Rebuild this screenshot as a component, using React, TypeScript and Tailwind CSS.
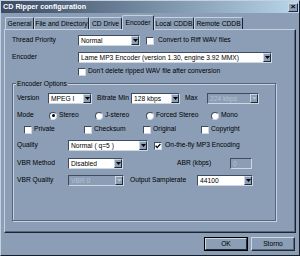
import React from 'react';

const sunken = 'border border-t-[#3f4b5e] border-l-[#3f4b5e] border-r-[#cdd8e5] border-b-[#cdd8e5]';
const raised = 'border border-t-[#cdd8e5] border-l-[#cdd8e5] border-r-[#222b38] border-b-[#222b38]';

function Arrow({ disabled }: { disabled?: boolean }) {
  return (
    <span className={`flex h-full w-[8px] shrink-0 items-center justify-center bg-[#8b9eb6] ${raised}`}>
      <svg width="5" height="3" viewBox="0 0 5 3">
        <polygon points="0,0 5,0 2.5,3" fill={disabled ? '#b4c2d4' : '#000'} />
      </svg>
    </span>
  );
}

function Combo({ width, value, disabled }: { width: string; value: string; disabled?: boolean }) {
  return (
    <div
      className={`flex h-[11px] shrink-0 ${width} ${sunken} ${
        disabled ? 'bg-[#8b9eb6] text-[#b4c2d4]' : 'bg-white text-black'
      }`}
    >
      <span className="flex-1 overflow-hidden whitespace-nowrap pl-[2px] leading-[9px]">{value}</span>
      <Arrow disabled={disabled} />
    </div>
  );
}

function Check({ checked }: { checked?: boolean }) {
  return (
    <span className={`flex h-[8px] w-[8px] shrink-0 items-center justify-center bg-white ${sunken}`}>
      {checked && (
        <svg width="6" height="6" viewBox="0 0 6 6">
          <path d="M0.6 2.8 L2.2 4.6 L5.4 1" stroke="#000" strokeWidth="1.3" fill="none" />
        </svg>
      )}
    </span>
  );
}

function Radio({ checked }: { checked?: boolean }) {
  return (
    <span className="flex h-[8px] w-[8px] shrink-0 items-center justify-center rounded-full border border-t-[#3f4b5e] border-l-[#3f4b5e] border-r-[#cdd8e5] border-b-[#cdd8e5] bg-white">
      {checked && <span className="h-[3px] w-[3px] rounded-full bg-black" />}
    </span>
  );
}

const tabs = [
  { label: 'General', w: 'w-[29px]' },
  { label: 'File and Directory', w: 'w-[55px]' },
  { label: 'CD Drive', w: 'w-[33px]' },
  { label: 'Encoder', w: 'w-[32px]', active: true },
  { label: 'Local CDDB', w: 'w-[40px]' },
  { label: 'Remote CDDB', w: 'w-[49px]' },
];

export default function App() {
  return (
    <div className="h-[256px] w-[300px] overflow-hidden bg-[#8b9eb6] font-['Liberation_Sans',Arial,sans-serif] text-[6.7px] text-black">
      <div className="flex h-full flex-col border border-t-[#c5d1df] border-l-[#c5d1df] border-r-[#161d28] border-b-[#161d28]">
        {/* title bar */}
        <div className="flex h-[12px] items-center justify-between bg-linear-to-r from-[#3a4a62] to-[#b9d6ea] pl-[2px] pr-[1px]">
          <span className="text-[7.2px] font-bold leading-none text-white">CD Ripper configuration</span>
          <span className={`flex h-[9px] w-[10px] items-center justify-center bg-[#8b9eb6] text-[8px] font-bold leading-none ${raised}`}>
            ×
          </span>
        </div>

        {/* tabs */}
        <div className="flex h-[16px] items-end pl-[4px]">
          {tabs.map((t) =>
            t.active ? (
              <div
                key={t.label}
                className={`relative z-10 -mb-[1px] flex h-[15px] ${t.w} items-start justify-center whitespace-nowrap rounded-t-[2px] border-t border-l border-r border-t-[#c5d1df] border-l-[#c5d1df] border-r-[#1c2430] bg-[#8b9eb6] pt-[2px] leading-[9px]`}
              >
                {t.label}
              </div>
            ) : (
              <div
                key={t.label}
                className={`flex h-[12px] ${t.w} items-center justify-center whitespace-nowrap rounded-t-[2px] border-t border-l border-r border-t-[#c5d1df] border-l-[#c5d1df] border-r-[#1c2430] leading-[9px]`}
              >
                {t.label}
              </div>
            )
          )}
        </div>

        {/* panel */}
        <div className="ml-[3px] flex h-[204px] w-[292px] flex-col border border-t-[#c5d1df] border-l-[#c5d1df] border-r-[#1c2430] border-b-[#1c2430] pl-[7px] shadow-[inset_-1px_-1px_0_#56667c]">
          <div className="mt-[5px] flex h-[11px] items-center">
            <span className="w-[66px] shrink-0">Thread Priority</span>
            <Combo width="w-[62px]" value="Normal" />
            <span className="ml-[6px]">
              <Check />
            </span>
            <span className="ml-[4px] whitespace-nowrap">Convert to Riff WAV files</span>
          </div>

          <div className="mt-[6px] flex h-[11px] items-center">
            <span className="w-[66px] shrink-0">Encoder</span>
            <Combo width="w-[194px]" value="Lame MP3 Encoder (version 1.30, engine 3.92 MMX)" />
          </div>

          <div className="mt-[4px] flex h-[9px] items-center pl-[66px]">
            <Check />
            <span className="ml-[2px] whitespace-nowrap">Don't delete ripped WAV file after conversion</span>
          </div>

          {/* group box */}
          <div className="mt-[7px] flex h-[138px] w-[264px] flex-col border border-[#56667c] pl-[4px] shadow-[inset_1px_1px_0_#c5d1df,1px_1px_0_#c5d1df]">
            <span className="-ml-[1px] -mt-[5px] h-[9px] w-fit bg-[#8b9eb6] px-[1px] leading-[9px]">Encoder Options</span>

            <div className="mt-[5px] flex h-[11px] items-center whitespace-nowrap">
              <span className="w-[31px] shrink-0">Version</span>
              <Combo width="w-[44px]" value="MPEG I" />
              <span className="ml-[5px] w-[34px] shrink-0">Bitrate Min</span>
              <Combo width="w-[49px]" value="128 kbps" />
              <span className="ml-[5px] w-[22px] shrink-0">Max</span>
              <Combo width="w-[52px]" value="224 kbps" disabled />
            </div>

            <div className="mt-[7px] flex h-[9px] items-center whitespace-nowrap">
              <span className="w-[32px] shrink-0">Mode</span>
              <span className="flex w-[46px] shrink-0 items-center">
                <Radio checked />
                <span className="ml-[2px]">Stereo</span>
              </span>
              <span className="flex w-[51px] shrink-0 items-center">
                <Radio />
                <span className="ml-[2px]">J-stereo</span>
              </span>
              <span className="flex w-[65px] shrink-0 items-center">
                <Radio />
                <span className="ml-[2px]">Forced Stereo</span>
              </span>
              <span className="flex items-center">
                <Radio />
                <span className="ml-[2px]">Mono</span>
              </span>
            </div>

            <div className="mt-[5px] flex h-[9px] items-center whitespace-nowrap pl-[7px]">
              <span className="flex w-[60px] shrink-0 items-center">
                <Check />
                <span className="ml-[2px]">Private</span>
              </span>
              <span className="flex w-[59px] shrink-0 items-center">
                <Check />
                <span className="ml-[2px]">Checksum</span>
              </span>
              <span className="flex w-[58px] shrink-0 items-center">
                <Check />
                <span className="ml-[2px]">Original</span>
              </span>
              <span className="flex items-center">
                <Check />
                <span className="ml-[2px]">Copyright</span>
              </span>
            </div>

            <div className="mt-[6px] flex h-[11px] items-center whitespace-nowrap">
              <span className="w-[51px] shrink-0">Quality</span>
              <Combo width="w-[80px]" value="Normal ( q=5 )" />
              <span className="ml-[6px]">
                <Check checked />
              </span>
              <span className="ml-[3px]">On-the-fly MP3 Encoding</span>
            </div>

            <div className="mt-[7px] flex h-[11px] items-center whitespace-nowrap">
              <span className="w-[51px] shrink-0">VBR Method</span>
              <Combo width="w-[55px]" value="Disabled" />
              <span className="ml-[54px] w-[53px] shrink-0">ABR (kbps)</span>
              <span className={`h-[11px] w-[22px] shrink-0 pl-[2px] leading-[9px] text-[#b4c2d4] ${sunken}`}>0</span>
            </div>

            <div className="mt-[6px] flex h-[11px] items-center whitespace-nowrap">
              <span className="w-[51px] shrink-0">VBR Quality</span>
              <Combo width="w-[56px]" value="VBR 0" disabled />
              <span className="ml-[6px] w-[67px] shrink-0">Output Samplerate</span>
              <Combo width="w-[56px]" value="44100" />
            </div>
          </div>
        </div>

        {/* buttons */}
        <div className="mt-[4px] flex justify-end gap-[3px] pr-[4px]">
          <div className="h-[14px] w-[44px] border border-black">
            <div className={`flex h-full items-center justify-center ${raised}`}>OK</div>
          </div>
          <div className={`flex h-[14px] w-[44px] items-center justify-center shadow-[inset_-1px_-1px_0_#56667c] ${raised}`}>
            Storno
          </div>
        </div>
      </div>
    </div>
  );
}
